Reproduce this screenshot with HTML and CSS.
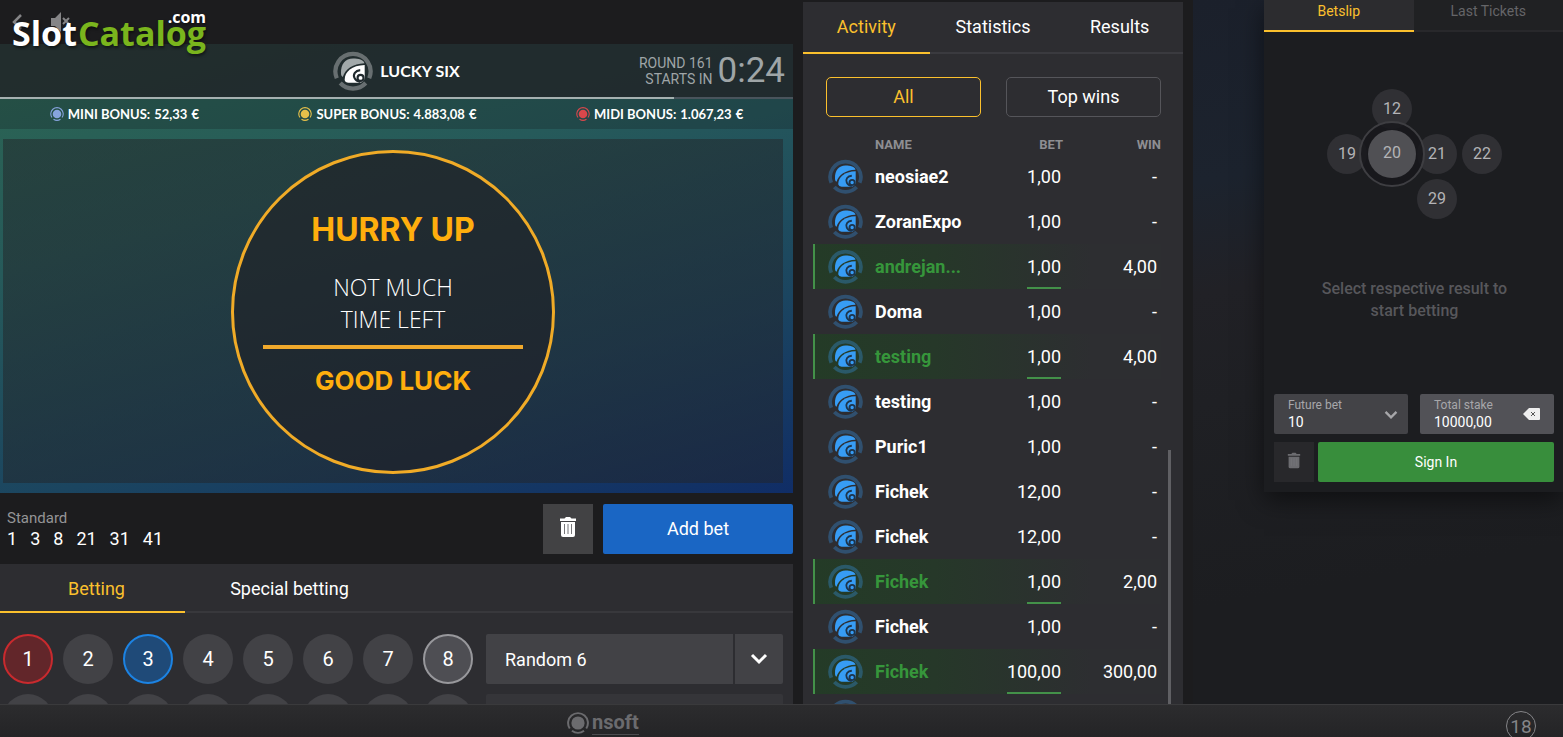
FILE: index.html
```html
<!DOCTYPE html>
<html lang="en">
<head>
  <meta charset="UTF-8">
  <meta name="viewport" content="width=device-width, initial-scale=1">
  <title>Lucky Six</title>
  <link rel="stylesheet" href="styles.css">
</head>
<body>

  <!-- Shared icons -->
  <svg class="icon-defs" aria-hidden="true">
    <symbol id="lucky" viewBox="0 0 36 36">
      <path class="ring" d="M3.400 24.500A15.800 15.800 0 1 1 32.600 24.500M29.500 28.800A15.800 15.800 0 0 1 6.500 28.800" />
      <path class="shell-back" d="M7.200 20C7 12 11 6.800 18 6.800c5 0 9.500 1.200 10.300 4.200C18 11.500 11 16 8.800 23.500 7.600 22.500 7.200 21.500 7.200 20z" />
      <path class="shell" d="M10.500 26C10.500 18.500 17 13 28.500 12.600V24q-.5 4-4.500 4.500H14q-3 0-3.500-2.500z" />
      <path class="shell-line" d="M24.500 17.200C20 17.500 17.800 21 19.300 24.200c1 2.200 2.500 3.300 5.200 3.600" />
      <circle class="shell-line" cx="24.800" cy="24.200" r="2.700" />
    </symbol>
    <symbol id="chip" viewBox="0 0 14 14">
      <circle cx="7" cy="7" r="4.300" fill="currentColor" />
      <path d="M2 10.500A6.200 6.200 0 1 1 12 10.500M10.500 12.200A6.200 6.200 0 0 1 3.500 12.200" fill="none" stroke="currentColor" stroke-width="1.100" />
    </symbol>
    <symbol id="trash" viewBox="0 0 18 22">
      <path d="M1 2.500h4.500L7 1h4l1.500 1.500H17V5H1z" fill="currentColor" />
      <path d="M2 6h14v13q0 2-2 2H4q-2 0-2-2z" fill="currentColor" />
      <path d="M5.500 8v10M9 8v10M12.500 8v10" class="trash-lines" />
    </symbol>
    <symbol id="chevron" viewBox="0 0 18 12">
      <path d="M2 2l7 7 7-7" fill="none" stroke="currentColor" stroke-width="3" />
    </symbol>
  </svg>

  <div class="site-logo"><span class="logo-slot">Slot</span><span class="logo-catalog">Catalog</span><span class="logo-com">.com</span></div>

  <main class="layout">
    <section class="game">
      <div class="top-bar">
        <button class="icon-button" aria-label="Back">
          <svg width="10" height="16" viewBox="0 0 10 16"><path d="M9 1L2 8l7 7" fill="none" stroke="currentColor" stroke-width="2.500" /></svg>
        </button>
        <button class="icon-button" aria-label="Unmute">
          <svg width="22" height="20" viewBox="0 0 22 20"><path d="M1 6h4l6-6v20l-6-6H1z" fill="currentColor" /><path d="M13 6l6 6M19 6l-6 6" stroke="currentColor" stroke-width="2" /></svg>
        </button>
      </div>

      <div class="board">
        <header class="game-header">
          <div class="game-title">
            <svg class="game-icon"><use href="#lucky" /></svg>
            <h1>LUCKY SIX</h1>
          </div>
          <div class="round">
            <p>ROUND 161<br>STARTS IN</p>
            <time>0:24</time>
          </div>
        </header>
        <div class="progress"><div class="progress-fill" style="width: 85%"></div></div>
        <ul class="bonuses">
          <li><svg class="chip mini"><use href="#chip" /></svg><span>MINI BONUS:</span><span>52,33</span><span>€</span></li>
          <li><svg class="chip super"><use href="#chip" /></svg><span>SUPER BONUS:</span><span>4.883,08</span><span>€</span></li>
          <li><svg class="chip midi"><use href="#chip" /></svg><span>MIDI BONUS:</span><span>1.067,23</span><span>€</span></li>
        </ul>
        <div class="screen">
          <div class="notice">
            <strong class="notice-title">HURRY UP</strong>
            <p>NOT MUCH<br>TIME LEFT</p>
            <hr>
            <strong class="notice-end">GOOD LUCK</strong>
          </div>
        </div>
      </div>

      <div class="selection">
        <div class="selected">
          <span class="selected-type">Standard</span>
          <div class="selected-numbers">
            <span>1</span><span>3</span><span>8</span><span>21</span><span>31</span><span>41</span>
          </div>
        </div>
        <button class="clear-button" aria-label="Clear"><svg class="trash"><use href="#trash" /></svg></button>
        <button class="add-button">Add bet</button>
      </div>

      <div class="betting">
        <nav class="bet-tabs">
          <button class="tab active">Betting</button>
          <button class="tab">Special betting</button>
        </nav>
        <div class="picker">
          <div class="balls">
            <button class="ball red">1</button>
            <button class="ball">2</button>
            <button class="ball blue">3</button>
            <button class="ball">4</button>
            <button class="ball">5</button>
            <button class="ball">6</button>
            <button class="ball">7</button>
            <button class="ball grey">8</button>
            <button class="ball" aria-label="9"></button>
            <button class="ball" aria-label="10"></button>
            <button class="ball" aria-label="11"></button>
            <button class="ball" aria-label="12"></button>
            <button class="ball" aria-label="13"></button>
            <button class="ball" aria-label="14"></button>
            <button class="ball" aria-label="15"></button>
            <button class="ball" aria-label="16"></button>
          </div>
          <div class="quick">
            <button class="random">Random 6</button>
            <button class="random-more" aria-label="More"><svg class="chevron"><use href="#chevron" /></svg></button>
            <button class="random-next" aria-label="Colour"></button>
          </div>
        </div>
      </div>
    </section>

    <section class="activity">
      <nav class="activity-tabs">
        <button class="tab active">Activity</button>
        <button class="tab">Statistics</button>
        <button class="tab">Results</button>
      </nav>
      <div class="filters">
        <button class="filter active">All</button>
        <button class="filter">Top wins</button>
      </div>
      <table class="feed">
        <thead>
          <tr><th class="avatar"></th><th class="name">NAME</th><th>BET</th><th>WIN</th></tr>
        </thead>
        <tbody>
          <tr><td class="avatar"><svg><use href="#lucky" /></svg></td><td class="name">neosiae2</td><td><span>1,00</span></td><td>-</td></tr>
          <tr><td class="avatar"><svg><use href="#lucky" /></svg></td><td class="name">ZoranExpo</td><td><span>1,00</span></td><td>-</td></tr>
          <tr class="won"><td class="avatar"><svg><use href="#lucky" /></svg></td><td class="name">andrejan...</td><td><span>1,00</span></td><td>4,00</td></tr>
          <tr><td class="avatar"><svg><use href="#lucky" /></svg></td><td class="name">Doma</td><td><span>1,00</span></td><td>-</td></tr>
          <tr class="won"><td class="avatar"><svg><use href="#lucky" /></svg></td><td class="name">testing</td><td><span>1,00</span></td><td>4,00</td></tr>
          <tr><td class="avatar"><svg><use href="#lucky" /></svg></td><td class="name">testing</td><td><span>1,00</span></td><td>-</td></tr>
          <tr><td class="avatar"><svg><use href="#lucky" /></svg></td><td class="name">Puric1</td><td><span>1,00</span></td><td>-</td></tr>
          <tr><td class="avatar"><svg><use href="#lucky" /></svg></td><td class="name">Fichek</td><td><span>12,00</span></td><td>-</td></tr>
          <tr><td class="avatar"><svg><use href="#lucky" /></svg></td><td class="name">Fichek</td><td><span>12,00</span></td><td>-</td></tr>
          <tr class="won"><td class="avatar"><svg><use href="#lucky" /></svg></td><td class="name">Fichek</td><td><span>1,00</span></td><td>2,00</td></tr>
          <tr><td class="avatar"><svg><use href="#lucky" /></svg></td><td class="name">Fichek</td><td><span>1,00</span></td><td>-</td></tr>
          <tr class="won"><td class="avatar"><svg><use href="#lucky" /></svg></td><td class="name">Fichek</td><td><span>100,00</span></td><td>300,00</td></tr>
          <tr><td class="avatar"><svg><use href="#lucky" /></svg></td><td class="name"></td><td></td><td></td></tr>
        </tbody>
      </table>
      <div class="scroll-thumb"></div>
    </section>

    <aside class="side">
      <div class="slip">
        <nav class="slip-tabs">
          <button class="tab active">Betslip</button>
          <button class="tab">Last Tickets</button>
        </nav>
        <div class="slip-empty">
          <div class="slip-balls">
            <span class="b12">12</span>
            <span class="b19">19</span>
            <span class="b21">21</span>
            <span class="b22">22</span>
            <span class="b29">29</span>
            <span class="b20"><b>20</b></span>
          </div>
          <p>Select respective result to start betting</p>
        </div>
        <form class="slip-form">
          <div class="field">
            <label for="future">Future bet</label>
            <select id="future"><option>10</option></select>
            <svg class="chevron"><use href="#chevron" /></svg>
          </div>
          <div class="field stake">
            <label for="stake">Total stake</label>
            <input type="text" id="stake" value="10000,00">
            <svg class="erase" viewBox="0 0 17 12"><path d="M6 0h10q1 0 1 1v10q0 1-1 1H6L0 6z" fill="#eee" /><path d="M8 4l4 4M12 4l-4 4" stroke="#555" /></svg>
          </div>
          <div class="slip-actions">
            <button type="button" class="slip-clear" aria-label="Clear betslip"><svg class="trash"><use href="#trash" /></svg></button>
            <button type="submit" class="sign-in">Sign In</button>
          </div>
        </form>
      </div>
    </aside>
  </main>

  <footer class="footer">
    <div class="nsoft">
      <svg width="22" height="22" viewBox="0 0 20 20"><circle cx="10" cy="10" r="6" fill="currentColor" /><path d="M2.500 15A9 9 0 1 1 17.500 15M15.500 17A9 9 0 0 1 4.500 17" fill="none" stroke="currentColor" stroke-width="1.800" /></svg>
      <span>nsoft</span>
    </div>
    <span class="age">18</span>
  </footer>

</body>
</html>
```
FILE: styles.css
```css
* {
  box-sizing: border-box;
}

body {
  font-family: Roboto, sans-serif;
  margin: 0;
  height: 100vh;
  overflow: hidden;
  display: flex;
  flex-direction: column;
  background: #1c1c1e;
  color: #fff;
}

h1, p, ul {
  margin: 0;
  padding: 0;
}

button {
  font: inherit;
  color: inherit;
  border: none;
  background: none;
  padding: 0;
  cursor: pointer;
}

.icon-defs {
  position: absolute;
  width: 0;
  height: 0;
}

.ring {
  fill: none;
  stroke: currentColor;
  stroke-width: 3.8;
  opacity: 0.32;
}

.shell {
  fill: currentColor;
}

.shell-back {
  fill: var(--shell-back, currentColor);
}

.shell-line {
  fill: none;
  stroke: var(--shell-line, #1d344c);
  stroke-width: 1.9;
}

.trash-lines {
  fill: none;
  stroke: #77777a;
  stroke-width: 1;
}

/* Logo over the game */
.site-logo {
  position: absolute;
  left: 12px;
  top: 8px;
  z-index: 2;
  display: flex;
  font-family: "Open Sans", sans-serif;
  font-weight: 700;
  font-size: 34px;
  line-height: 50px;
  text-shadow: 1px 2px 3px rgba(0, 0, 0, 0.5);
}

.logo-catalog {
  color: #7ab51d;
  margin-left: 1px;
}

.logo-com {
  position: absolute;
  right: 0;
  top: 0;
  font-size: 16px;
  line-height: 18px;
}

.layout {
  flex: 1;
  min-height: 0;
  overflow: hidden;
  display: grid;
  grid-template-columns: minmax(0, 1fr) 380px 370px;
  gap: 10px;
}

/* Game */
.game {
  display: flex;
  flex-direction: column;
  min-height: 0;
}

.top-bar {
  height: 44px;
  flex: none;
  display: flex;
  align-items: center;
  gap: 28px;
  padding: 0 12px;
  color: #858587;
}

.icon-button {
  display: flex;
}

.board {
  flex: none;
  background: linear-gradient(165deg, #2c6652 0%, #265a5a 35%, #1b4560 70%, #102d66 100%);
}

.game-header {
  display: grid;
  grid-template-columns: 1fr auto 1fr;
  align-items: center;
  height: 53px;
  padding: 0 8px;
  background: rgba(32, 34, 38, 0.84);
}

.game-title {
  grid-column: 2;
  display: flex;
  align-items: center;
  gap: 7px;
}

.game-icon {
  width: 40px;
  height: 40px;
  --shell-back: #a2a9aa;
  --shell-line: #20292d;
}

.game-title h1 {
  font-family: Lato, sans-serif;
  font-size: 16px;
  line-height: 20px;
  font-weight: 700;
}

.round {
  justify-self: end;
  display: flex;
  align-items: center;
  gap: 5px;
  color: #9fa5a7;
  text-align: right;
}

.round p {
  font-size: 14px;
  line-height: 16px;
}

.round time {
  font-size: 35px;
  line-height: 40px;
}

.progress {
  height: 2px;
  background: #49545c;
}

.progress-fill {
  height: 2px;
  background: #a5b0b0;
}

.bonuses {
  display: flex;
  justify-content: space-around;
  align-items: center;
  height: 30px;
  list-style: none;
  font-family: Lato, sans-serif;
  font-size: 13px;
  line-height: 16px;
  font-weight: 700;
  background: rgba(24, 32, 36, 0.3);
}

.bonuses li {
  display: flex;
  align-items: center;
  gap: 4px;
}

.chip {
  width: 14px;
  height: 14px;
}

.mini {
  color: #86a3dd;
}

.super {
  color: #e6c04a;
}

.midi {
  color: #d9474b;
}

.screen {
  padding: 10px 10px 10px 3px;
  background: linear-gradient(rgba(34, 36, 40, 0.5), rgba(34, 36, 40, 0.5)) content-box;
}

.notice {
  display: flex;
  flex-direction: column;
  align-items: center;
  width: 324px;
  height: 324px;
  margin: 11px auto 9px;
  padding-top: 56px;
  border: 3px solid #f0ab27;
  border-radius: 50%;
  background: rgba(32, 32, 36, 0.6);
  font-family: Inter, sans-serif;
  text-align: center;
}

.notice-title {
  color: #ffae0d;
  font-size: 32px;
  line-height: 42px;
}

.notice p {
  margin: 20px 0 10px;
  font-family: "Open Sans", sans-serif;
  font-size: 23px;
  line-height: 32px;
  font-weight: 300;
}

.notice hr {
  width: 260px;
  height: 4px;
  margin: 0;
  border: none;
  background: #f0a92c;
}

.notice-end {
  margin-top: 14px;
  color: #ffae0d;
  font-size: 26px;
  line-height: 36px;
}

.selection {
  flex: none;
  display: flex;
  align-items: center;
  gap: 10px;
  height: 71px;
}

.selected {
  flex: 1;
  padding-left: 7px;
}

.selected-type {
  display: block;
  color: #949496;
  font-size: 15px;
  line-height: 20px;
}

.selected-numbers {
  display: flex;
  gap: 13px;
  font-size: 18px;
  line-height: 22px;
}

.clear-button {
  width: 50px;
  height: 50px;
  background: #424244;
}

.trash {
  width: 18px;
  height: 22px;
}

.add-button {
  width: 190px;
  height: 50px;
  border-radius: 2px;
  background: #1a66c4;
  font-size: 18px;
}

.betting {
  flex: 1;
  min-height: 0;
  overflow: hidden;
  background: #2d2d31;
}

.bet-tabs {
  display: flex;
  height: 49px;
  border-bottom: 2px solid #38383c;
}

.bet-tabs .tab {
  position: relative;
  width: 193px;
  height: 49px;
  border: none;
}

.bet-tabs .active::after {
  content: "";
  position: absolute;
  left: 0;
  right: 8px;
  bottom: 0;
  height: 2px;
  background: #fbc02d;
}

.tab {
  font-size: 18px;
  border-bottom: 2px solid transparent;
}

.tab.active {
  color: #fbc02d;
  border-color: #fbc02d;
}

.picker {
  display: flex;
  gap: 13px;
  padding: 21px 10px 0 3px;
}

.balls {
  display: grid;
  grid-template-columns: repeat(8, 50px);
  gap: 10px;
}

.ball {
  height: 50px;
  border-radius: 50%;
  background: #424246;
  font-size: 20px;
}

.ball.red {
  border: 2px solid #c92a2e;
  background: #62262a;
}

.ball.blue {
  border: 2px solid #1c83e3;
  background: #1f4a78;
}

.ball.grey {
  border: 2px solid #98989c;
  background: #4e4e53;
}

.quick {
  flex: 1;
  display: grid;
  grid-template-columns: 1fr 48px;
  grid-template-rows: 50px 50px;
  gap: 10px 2px;
}

.random {
  padding-left: 19px;
  border-radius: 2px 0 0 2px;
  background: #424246;
  font-size: 18px;
  text-align: left;
}

.random-more {
  border-radius: 0 2px 2px 0;
  background: #424246;
}

.chevron {
  width: 18px;
  height: 12px;
}

.random-next {
  grid-column: 1 / 3;
  border-radius: 2px;
  background: #353539;
}

/* Activity */
.activity {
  position: relative;
  margin-top: 2px;
  min-height: 0;
  overflow: hidden;
  background: #2d2d31;
}

.activity-tabs {
  display: grid;
  grid-template-columns: repeat(3, 1fr);
  height: 52px;
  border-bottom: 2px solid #3a3a3f;
}

.activity-tabs .tab {
  height: 52px;
  padding-bottom: 2px;
}

.filters {
  display: grid;
  grid-template-columns: 1fr 1fr;
  gap: 25px;
  padding: 23px 22px 0 23px;
}

.filter {
  height: 40px;
  padding-bottom: 2px;
  border: 1px solid #55555a;
  border-radius: 5px;
  font-size: 18px;
}

.filter.active {
  color: #fbc02d;
  border-color: #fbc02d;
}

.feed {
  width: 348px;
  margin: 19px 0 0 10px;
  border-collapse: collapse;
  table-layout: fixed;
  font-size: 18px;
  text-align: right;
}

.feed th {
  height: 18px;
  padding: 0;
  color: #8e8e92;
  font-size: 13px;
  line-height: 16px;
}

.feed th:nth-child(3) {
  padding-right: 2px;
}

.feed td {
  height: 45px;
  padding: 0 4px 0 0;
  line-height: 45px;
}

.feed .avatar {
  width: 62px;
  padding: 0 0 0 15px;
  color: #379cf4;
}

.avatar svg {
  display: block;
  width: 35px;
  height: 35px;
}

.feed .name {
  width: 94px;
  text-align: left;
  font-weight: 700;
}

.feed td span {
  display: inline-block;
  height: 45px;
}

.won {
  background: linear-gradient(90deg, #243b27 0%, #263829 35%, #2d2e31 80%);
}

.won .avatar {
  box-shadow: inset 2px 0 #439149;
}

.won .name {
  color: #36963b;
}

.won td span {
  border-bottom: 2px solid #439149;
}

.scroll-thumb {
  position: absolute;
  right: 12px;
  bottom: 0;
  width: 3px;
  height: 254px;
  background: #606064;
}

/* Betslip */
.side {
  padding-left: 71px;
  background: linear-gradient(170deg, #1b202b 0, #1c232e 180px, #212126 290px, #1f2024 400px, #1c1d20 600px);
}

.slip {
  height: 492px;
  display: flex;
  flex-direction: column;
  background: #1c1d20;
  box-shadow: 0 8px 24px rgba(0, 0, 0, 0.5);
}

.slip-tabs {
  display: grid;
  grid-template-columns: 1fr 1fr;
  height: 32px;
}

.slip-tabs .tab {
  padding-bottom: 8px;
  border-color: #28282b;
  background: #202123;
  color: #656568;
  font-size: 14px;
}

.slip-tabs .tab.active {
  color: #fbc02d;
  border-color: #fbc02d;
  background: #2c2c2f;
}

.slip-empty {
  flex: 1;
  padding: 57px 0 0 2px;
  text-align: center;
}

.slip-balls {
  display: grid;
  grid-template-columns: repeat(4, 40px);
  grid-template-rows: repeat(3, 40px);
  gap: 5px;
  justify-content: center;
  font-size: 16px;
  line-height: 40px;
  color: #b4b4b7;
}

.slip-balls span {
  border-radius: 50%;
  background: #303034;
}

.b12 {
  grid-area: 1 / 2;
}

.b19 {
  grid-area: 2 / 1;
}

.b21 {
  grid-area: 2 / 3;
}

.b22 {
  grid-area: 2 / 4;
}

.b29 {
  grid-area: 3 / 3;
}

.slip-balls .b20 {
  grid-area: 2 / 2;
  margin: -13px;
  padding: 7px;
  border: 2px solid #3e3e42;
  background: rgba(24, 24, 28, 0.85);
}

.b20 b {
  display: block;
  height: 48px;
  border-radius: 50%;
  background: #505054;
  font-weight: 400;
  line-height: 46px;
}

.slip-empty p {
  width: 200px;
  margin: 59px auto 0;
  color: #57575b;
  font-size: 16px;
  line-height: 22px;
  font-weight: 500;
}

.slip-form {
  display: grid;
  grid-template-columns: repeat(2, 1fr);
  gap: 8px 12px;
  padding: 0 9px 10px 10px;
}

.field {
  position: relative;
  height: 40px;
  border-radius: 2px;
  background: #434347;
}

.field.stake {
  background: #525257;
}

.field label {
  position: absolute;
  left: 14px;
  top: 3px;
  color: #a7a7aa;
  font-size: 12px;
  line-height: 16px;
}

.field select, .field input {
  width: 100%;
  height: 40px;
  padding: 16px 14px 0;
  border: none;
  appearance: none;
  background: none;
  color: #fff;
  font: 14px Roboto, sans-serif;
}

.field .chevron, .field .erase {
  position: absolute;
  right: 10px;
  top: 15px;
  width: 14px;
  height: 12px;
  color: #a7a7aa;
}

.field .erase {
  right: 14px;
  top: 14px;
  width: 17px;
}

.slip-actions {
  grid-column: 1 / 3;
  display: flex;
  gap: 4px;
}

.slip-clear {
  width: 40px;
  height: 40px;
  background: #28282b;
  color: #6c6c70;
}

.slip-clear .trash {
  width: 14px;
  height: 17px;
}

.slip-clear .trash-lines {
  stroke: #3c3c3f;
}

.sign-in {
  flex: 1;
  height: 40px;
  border-radius: 2px;
  background: #388e3c;
  font-size: 14px;
}

/* Footer */
.footer {
  flex: none;
  display: grid;
  grid-template-columns: 1fr auto;
  height: 33px;
  overflow: hidden;
  border-top: 1px solid #3a3a3c;
  background: linear-gradient(#2c2c2e, #242426);
}

.nsoft {
  display: flex;
  align-items: center;
  gap: 3px;
  padding-left: 567px;
  color: #6b6b6e;
  font-size: 20px;
  line-height: 20px;
  font-weight: 700;
}

.nsoft span {
  padding-bottom: 2px;
  border-bottom: 1px solid #4b4b4e;
}

.age {
  width: 30px;
  height: 30px;
  margin: 6px 27px 0 0;
  border: 1px solid #858588;
  border-radius: 50%;
  color: #858588;
  font-size: 19px;
  line-height: 30px;
  text-align: center;
}
```
